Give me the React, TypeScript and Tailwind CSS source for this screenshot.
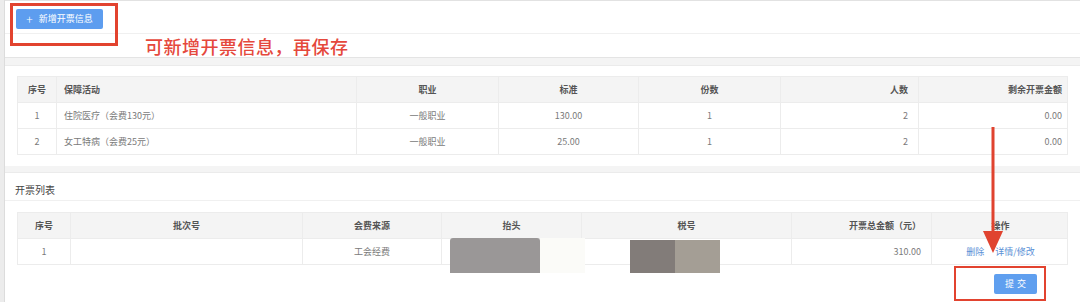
import React from "react";

const t1Cols = [
  { w: "w-[39px]", align: "text-center" },
  { w: "w-[300px]", align: "text-left pl-[7px]" },
  { w: "w-[142px]", align: "text-center" },
  { w: "w-[140px]", align: "text-center" },
  { w: "w-[142px]", align: "text-center" },
  { w: "w-[138px]", align: "text-right pr-[10px]" },
  { w: "w-[150px]", align: "text-right pr-[7px]" },
];

const t1Head = ["序号", "保障活动", "职业", "标准", "份数", "人数", "剩余开票金额"];
const t1Rows = [
  ["1", "住院医疗（会费130元）", "一般职业", "130.00", "1", "2", "0.00"],
  ["2", "女工特病（会费25元）", "一般职业", "25.00", "1", "2", "0.00"],
];

const t2Cols = [
  { w: "w-[53px]", align: "text-center" },
  { w: "w-[232px]", align: "text-center" },
  { w: "w-[139px]", align: "text-center" },
  { w: "w-[140px]", align: "text-center" },
  { w: "w-[210px]", align: "text-center" },
  { w: "w-[140px]", align: "text-right pr-[10px]" },
  { w: "w-[137px]", align: "text-center" },
];
const t2Head = ["序号", "批次号", "会费来源", "抬头", "税号", "开票总金额（元）", "操作"];

function Row({
  cells,
  cols,
  head,
}: {
  cells: React.ReactNode[];
  cols: { w: string; align: string }[];
  head?: boolean;
}) {
  return (
    <div
      className={
        "flex h-[26px] border-b border-[#ececec] " +
        (head ? "bg-[#f4f4f4] text-[#555] font-semibold" : "bg-white text-[#7a7a7a]")
      }
    >
      {cells.map((c, i) => (
        <div
          key={i}
          className={
            cols[i].w +
            " " +
            cols[i].align +
            " shrink-0 leading-[26px] border-r border-[#ececec] last:border-r-0 whitespace-nowrap"
          }
        >
          {c}
        </div>
      ))}
    </div>
  );
}

export default function App() {
  return (
    <div className="relative w-[1080px] h-[302px] overflow-hidden bg-[#f4f4f4] flex text-[9px] font-['Noto_Sans_CJK_SC','Noto_Sans',sans-serif]">
      <div className="w-[5px] shrink-0 bg-[#ececec] border-r border-[#dcdcdc]" />
      <div className="flex-1 flex flex-col border-t border-[#e2e2e2]">
        {/* top card */}
        <div className="bg-white h-[57px] flex flex-col border-b border-[#e4e4e4]">
          <div className="h-[33px] border-b border-[#f0f0f0] flex items-start pl-[11px] pt-[8px]">
            <button className="h-[20px] w-[87px] rounded-[2px] bg-[#5d9def] text-white text-[9px] flex items-center justify-center gap-[6px]">
              <span className="text-[12px] leading-none font-light">+</span>
              <span>新增开票信息</span>
            </button>
          </div>
          <div className="flex-1 pl-[140px] flex items-center">
            <span className="text-[18px] leading-none text-[#e5483c] font-medium tracking-[0.5px]">
              可新增开票信息，再保存
            </span>
          </div>
        </div>
        {/* table 1 card */}
        <div className="mt-[7px] bg-white h-[101px] border-t border-[#ebebeb] pt-[10px] pl-[12px]">
          <div className="w-[1051px] border-t border-l border-r border-[#ececec]">
            <Row cells={t1Head} cols={t1Cols} head />
            {t1Rows.map((r, i) => (
              <Row key={i} cells={r} cols={t1Cols} />
            ))}
          </div>
        </div>
        {/* invoice list card */}
        <div className="mt-[6px] bg-white flex-1 border-t border-[#ebebeb] flex flex-col">
          <div className="h-[28px] border-b border-[#f0f0f0] pl-[10px] flex items-center pt-[6px] text-[10px] text-[#444]">
            开票列表
          </div>
          <div className="pt-[11px] pl-[12px]">
            <div className="relative w-[1051px] border-t border-l border-r border-[#ececec]">
              <Row cells={t2Head} cols={t2Cols} head />
              <Row
                cells={[
                  "1",
                  "",
                  "工会经费",
                  "",
                  "",
                  "310.00",
                  <span key="op" className="text-[#5a8fd6]">
                    删除<span className="inline-block w-[11px]" />详情/修改
                  </span>,
                ]}
                cols={t2Cols}
              />
            </div>
            <div className="flex justify-end pr-[43px] mt-[9px]">
              <button className="h-[20px] w-[43px] rounded-[2px] bg-[#5f9fef] text-white text-[9px] tracking-[3px] pl-[3px]">
                提交
              </button>
            </div>
          </div>
        </div>
      </div>

      {/* redaction blurs */}
      <div className="absolute left-[450px] top-[238px] w-[90px] h-[35px] bg-[#9a9797] rounded-t-[3px]" />
      <div className="absolute left-[540px] top-[238px] w-[45px] h-[35px] bg-[#fbfbf8]" />
      <div className="absolute left-[630px] top-[240px] w-[45px] h-[33px] bg-[#827c79]" />
      <div className="absolute left-[675px] top-[240px] w-[45px] h-[33px] bg-[#a49e95]" />

      {/* annotations */}
      <div className="absolute left-[10px] top-[3px] w-[108px] h-[43px] border-[3px] border-[#e2432f]" />
      <div className="absolute left-[954px] top-[266px] w-[92px] h-[35px] border-[2px] border-[#e2432f]" />
      <svg className="absolute left-[980px] top-[127px]" width="26" height="128" viewBox="0 0 26 128">
        <rect x="11.5" y="0" width="3" height="106" fill="#e0432f" />
        <polygon points="3,104 23,104 13,126" fill="#e0432f" />
      </svg>
    </div>
  );
}
